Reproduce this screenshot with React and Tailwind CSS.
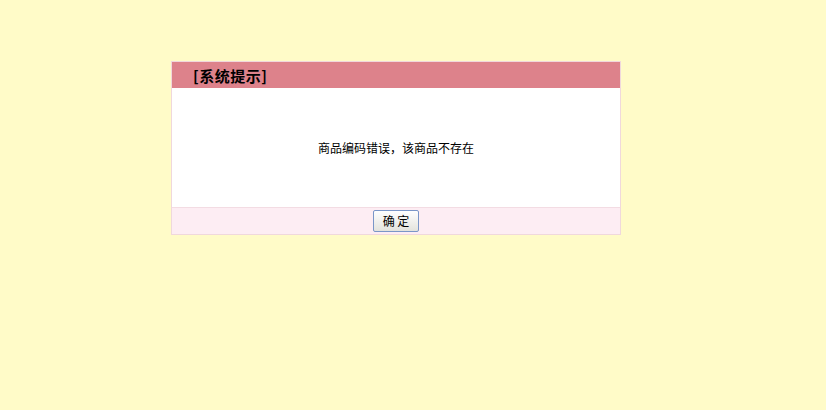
export default function App() {
  return (
    <div className="min-h-[410px] w-full bg-[#fffbc8] pt-[61px] pl-[171px]" style={{ fontFamily: '"Noto Sans CJK SC", "Noto Sans", sans-serif' }}>
      <div className="w-[450px] border border-[#f0d8dc] bg-white">
        <div className="h-[26px] bg-[#dd828b] pl-[21px] flex items-center text-[15px] font-bold text-black leading-none tracking-[0.5px]">
          [系统提示]
        </div>
        <div className="h-[120px] flex items-center justify-center text-[12px] text-black border-b border-[#f3dce3]">
          商品编码错误，该商品不存在
        </div>
        <div className="h-[26px] bg-[#fdedf3] flex items-center justify-center">
          <button className="h-[22px] w-[46px] border border-[#7a96c8] rounded-[2px] bg-gradient-to-b from-[#ffffff] to-[#e3e3dd] text-[12px] text-black leading-none whitespace-pre">
            确 定
          </button>
        </div>
      </div>
    </div>
  );
}
